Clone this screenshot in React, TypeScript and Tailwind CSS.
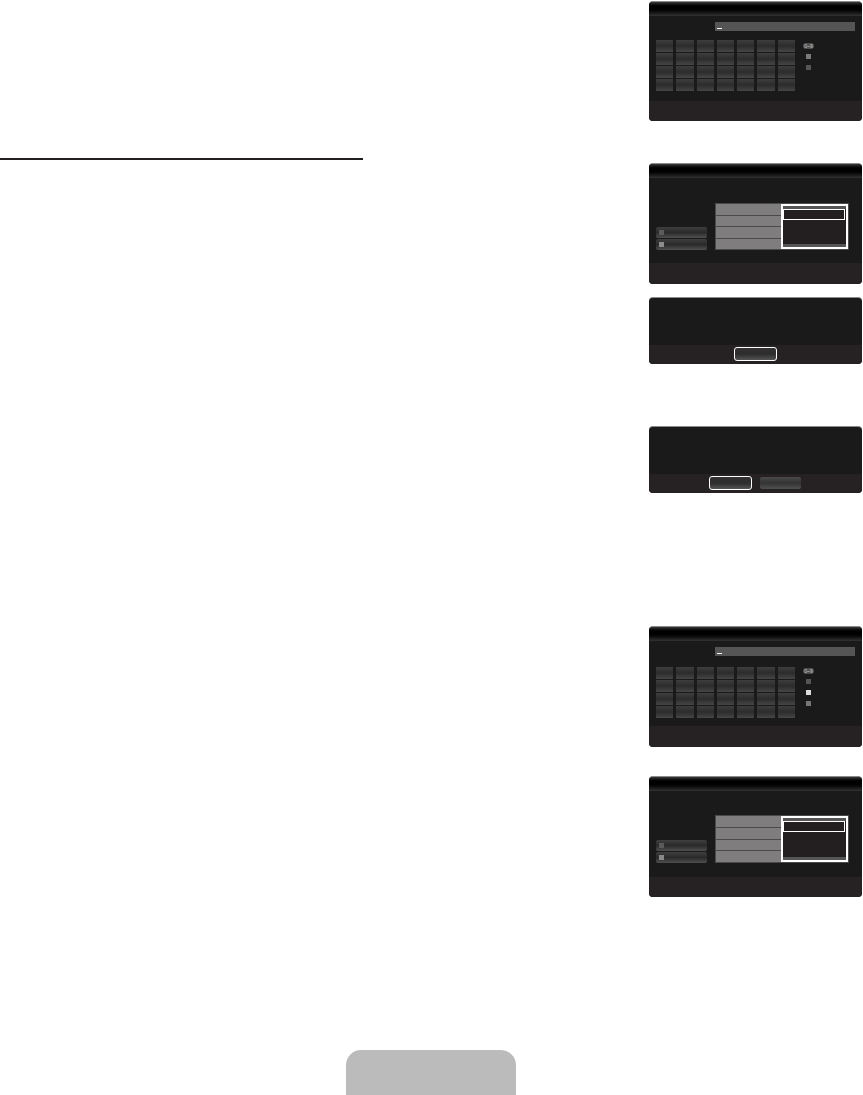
const Header = () => (
  <div className="h-[14px] shrink-0 bg-linear-to-b from-[#3a3a3a] via-[#000000] via-40% to-[#2a2a2a] border-b border-[#2e2e2e]" />
);

const Footer = ({ className, children }: { className: string; children?: React.ReactNode }) => (
  <div className={`shrink-0 bg-[#262223] ${className}`}>{children}</div>
);

const Panel = ({ className, children }: { className: string; children: React.ReactNode }) => (
  <div className={`w-[213px] flex flex-col rounded-[4px] overflow-hidden bg-[#1a1a1a] border-t border-[#8a8a8a] ${className}`}>
    {children}
  </div>
);

function KeyGrid() {
  return (
    <div className="grid grid-cols-7 w-[139px] gap-x-[3px] gap-y-px">
      {Array.from({ length: 28 }).map((_, i) => (
        <div key={i} className="h-3 bg-linear-to-b from-[#3e3e3e] via-[#2c2c2c] to-[#464646]" />
      ))}
    </div>
  );
}

function KeypadPanel({
  className,
  inputGap,
  sideClass,
  footerClass,
  dots,
}: {
  className: string;
  inputGap: string;
  sideClass: string;
  footerClass: string;
  dots: string[];
}) {
  return (
    <Panel className={className}>
      <Header />
      <div className="flex-1 pt-[6px]">
        <div className="ml-[66px] w-[140px] h-[9px] bg-[#555555] flex items-end pb-[2px] pl-[2px]">
          <div className="w-[5px] h-px bg-white" />
        </div>
        <div className={`flex ${inputGap}`}>
          <div className="ml-[7px]">
            <KeyGrid />
          </div>
          <div className={`ml-[8px] w-[11px] flex flex-col items-center gap-[6px] ${sideClass}`}>
            <div className="w-[11px] h-[6px] -mb-px rounded-full bg-[#4f4f4f] flex items-center justify-center overflow-hidden text-[5px] leading-none text-[#cccccc] font-['Liberation_Sans',sans-serif]">
              0~9
            </div>
            {dots.map((c) => (
              <div key={c} className={`w-[5px] h-[5px] ${c}`} />
            ))}
          </div>
        </div>
      </div>
      <Footer className={footerClass} />
    </Panel>
  );
}

function TablePanel({
  className,
  bodyClass,
  tableClass,
  footerClass,
  firstDot,
  secondDot,
}: {
  className: string;
  bodyClass: string;
  tableClass: string;
  footerClass: string;
  firstDot: string;
  secondDot: string;
}) {
  return (
    <Panel className={className}>
      <Header />
      <div className={`flex-1 flex items-end ${bodyClass}`}>
        <div className="ml-[7px] w-[51px] flex flex-col gap-px">
          {[firstDot, secondDot].map((c) => (
            <div
              key={c}
              className="h-[11px] rounded-[2px] bg-linear-to-b from-[#3f3f3f] via-[#2a2a2a] to-[#505050] flex items-center pl-[3px]"
            >
              <div className={`w-[5px] h-[5px] ${c}`} />
            </div>
          ))}
        </div>
        <div className={`ml-[8px] w-[134px] bg-[#4a4a4a] flex items-stretch p-px ${tableClass}`}>
          <div className="w-[65px] flex flex-col gap-px">
            <div className="flex-1 bg-[#7f7d7e]" />
            <div className="flex-1 bg-[#7f7d7e]" />
            <div className="flex-1 bg-[#7f7d7e]" />
            <div className="flex-1 bg-[#7f7d7e]" />
          </div>
          <div className="flex-1 border-2 border-white bg-[#231f20] flex flex-col">
            <div className="h-[3px] bg-[#555555]" />
            <div className="mr-px h-[11px] border border-white" />
            <div className="flex-1" />
            <div className="h-[3px] bg-[#555555]" />
          </div>
        </div>
      </div>
      <Footer className={footerClass} />
    </Panel>
  );
}

export default function App() {
  return (
    <div className="w-[863px] h-[1095px] bg-white flex flex-col overflow-hidden">
      <div className="flex flex-1">
        <div className="w-[649px] pt-[158px]">
          <div className="w-[363px] h-[2px] bg-[#231f20]" />
        </div>
        <div className="w-[213px] flex flex-col">
          <KeypadPanel
            className="mt-px h-[120px]"
            inputGap="mt-[9px]"
            sideClass="mt-[3px]"
            footerClass="h-[20px]"
            dots={["bg-[#7a7a7a]", "bg-[#555555]"]}
          />
          <TablePanel
            className="mt-[42px] h-[121px]"
            bodyClass="pb-[13px]"
            tableClass="h-[47px]"
            footerClass="h-[21px]"
            firstDot="bg-[#5c5c5c]"
            secondDot="bg-[#8c8c8c]"
          />
          <Panel className="mt-[13px] h-[67px]">
            <div className="flex-1" />
            <Footer className="h-[19px] flex justify-center pt-[2px]">
              <div className="ml-[-1px] w-[43px] h-[14px] rounded-[3px] border border-white bg-linear-to-b from-[#333333] via-[#2c2c2c] to-[#555555]" />
            </Footer>
          </Panel>
          <Panel className="mt-[62px] h-[67px]">
            <div className="flex-1" />
            <Footer className="h-[19px] flex pt-[2px] pl-[60px] gap-[8px]">
              <div className="w-[43px] h-[14px] rounded-[3px] border border-white bg-linear-to-b from-[#333333] via-[#2c2c2c] to-[#555555]" />
              <div className="w-[41px] h-[12px] mt-px rounded-[2px] bg-linear-to-b from-[#4a4a4a] via-[#333333] to-[#505050]" />
            </Footer>
          </Panel>
          <KeypadPanel
            className="mt-[133px] h-[121px]"
            inputGap="mt-[11px]"
            sideClass="mt-px"
            footerClass="h-[21px]"
            dots={["bg-[#555555]", "bg-[#dddddd]", "bg-[#777777]"]}
          />
          <TablePanel
            className="mt-[29px] h-[121px]"
            bodyClass="pb-[14px]"
            tableClass="h-[48px]"
            footerClass="h-[20px]"
            firstDot="bg-[#5a5a5a]"
            secondDot="bg-[#888888]"
          />
        </div>
      </div>
      <div className="ml-[346px] w-[170px] h-[45px] shrink-0 bg-[#bbbbbb] rounded-t-[15px]" />
    </div>
  );
}
